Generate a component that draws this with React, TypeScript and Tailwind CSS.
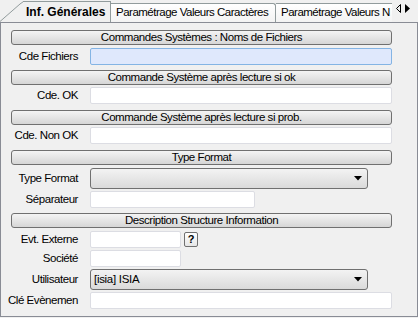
import React from 'react';

const FONT = { fontFamily: '"Liberation Sans", Arial, sans-serif' };

// Grey bevelled bar used as a section title
function SectionBar({ title, mt }: { title: string; mt: string }) {
    return (
        <div className={`${mt} ml-[10px] w-[381px] h-[15px] rounded-[3px] border border-[#707070] bg-gradient-to-b from-[#f4f4f4] to-[#d6d6d6] flex items-center justify-center text-[11.5px] tracking-[-0.45px] leading-none text-black pt-[1px]`}>
            {title}
        </div>
    );
}

function Field({ label, mt, width, focused, children }: { label: string; mt: string; width: string; focused?: boolean; children?: React.ReactNode }) {
    return (
        <div className={`${mt} flex items-center`}>
            <div className="w-[77px] text-right text-[11.5px] tracking-[-0.45px] leading-none whitespace-nowrap text-black pt-[1px]">{label}</div>
            <div
                className={`ml-[12px] ${width} h-[17px] rounded-[2px] border ${focused ? 'border-[#84b4e4] bg-[#dfe8fc]' : 'border-[#dcdde3] bg-white'}`}
            />
            {children}
        </div>
    );
}

function SelectField({ label, mt, value }: { label: string; mt: string; value?: string }) {
    return (
        <div className={`${mt} flex items-center`}>
            <div className="w-[77px] text-right text-[11.5px] tracking-[-0.45px] leading-none whitespace-nowrap text-black pt-[1px]">{label}</div>
            <div className="ml-[12px] w-[278px] h-[21px] rounded-[3px] border border-[#707070] bg-gradient-to-b from-[#f3f3f3] to-[#dadada] flex items-center pl-[3px] pr-[5px]">
                <span className="flex-1 text-[11.5px] tracking-[-0.3px] leading-none text-black pt-[1px]">{value}</span>
                <svg width="8" height="5" viewBox="0 0 8 5">
                    <polygon points="0,0 8,0 4,4.5" fill="#000" />
                </svg>
            </div>
        </div>
    );
}

export default function App() {
    return (
        <div className="w-[418px] h-[318px] bg-[#f0f0f0] overflow-hidden" style={FONT}>
            {/* Tab strip */}
            <div className="h-[22px] flex items-end">
                <svg width="24" height="22" viewBox="0 0 24 22" className="shrink-0">
                    <polyline points="0,21.5 20,4 23.5,1.5" fill="none" stroke="#919b9c" strokeWidth="1" />
                </svg>
                <div className="h-[21px] w-[88px] -ml-[1px] border-t border-r border-[#919b9c] bg-[#f0f0f0] flex items-center pl-[3px] text-[12px] font-bold leading-none text-black">
                    Inf. Générales
                </div>
                <div className="h-[19px] w-[165px] rounded-tr-[3px] border-t border-r border-[#919b9c] bg-gradient-to-b from-[#ffffff] to-[#f3f3f3] flex items-center pl-[5px] text-[11.5px] tracking-[-0.5px] leading-none text-black whitespace-nowrap">
                    Paramétrage Valeurs Caractères
                </div>
                <div className="h-[19px] w-[116px] border-t border-[#919b9c] bg-gradient-to-b from-[#ffffff] to-[#f3f3f3] flex items-center pl-[5px] text-[11.5px] tracking-[-0.5px] leading-none text-black whitespace-nowrap overflow-hidden">
                    Paramétrage Valeurs N
                </div>
                <div className="flex-1 self-start mt-[4px] flex items-center gap-[4px] pl-[4px]">
                    <svg width="5" height="9" viewBox="0 0 5 9">
                        <polygon points="4.5,0.5 0.5,4.5 4.5,8.5" fill="none" stroke="#000" strokeWidth="1" />
                    </svg>
                    <svg width="5" height="9" viewBox="0 0 5 9">
                        <polygon points="0,0 5,4.5 0,9" fill="#000" />
                    </svg>
                </div>
            </div>

            {/* Panel */}
            <div className="h-[295px] border border-[#898c95] flex flex-col">
                <SectionBar title="Commandes Systèmes : Noms de Fichiers" mt="mt-[7px]" />
                <Field label="Cde Fichiers" mt="mt-[3px]" width="w-[302px]" focused />

                <SectionBar title="Commande Système après lecture si ok" mt="mt-[5px]" />
                <Field label="Cde. OK" mt="mt-[2px]" width="w-[302px]" />

                <SectionBar title="Commande Système après lecture si prob." mt="mt-[6px]" />
                <Field label="Cde. Non OK" mt="mt-[2px]" width="w-[302px]" />

                <SectionBar title="Type Format" mt="mt-[6px]" />
                <SelectField label="Type Format" mt="mt-[3px]" />
                <Field label="Séparateur" mt="mt-[2px]" width="w-[165px]" />

                <SectionBar title="Description Structure Information" mt="mt-[5px]" />
                <Field label="Evt. Externe" mt="mt-[3px]" width="w-[91px]">
                    <div className="ml-[3px] w-[14px] h-[15px] rounded-[2px] border border-[#707070] bg-gradient-to-b from-[#ffffff] to-[#e6e6e6] flex items-center justify-center text-[11px] font-bold leading-none text-black">
                        ?
                    </div>
                </Field>
                <Field label="Société" mt="mt-[2px]" width="w-[91px]" />
                <SelectField label="Utilisateur" mt="mt-[2px]" value="[isia] ISIA" />
                <Field label="Clé Evènemen" mt="mt-[2px]" width="w-[302px]" />
            </div>
        </div>
    );
}
